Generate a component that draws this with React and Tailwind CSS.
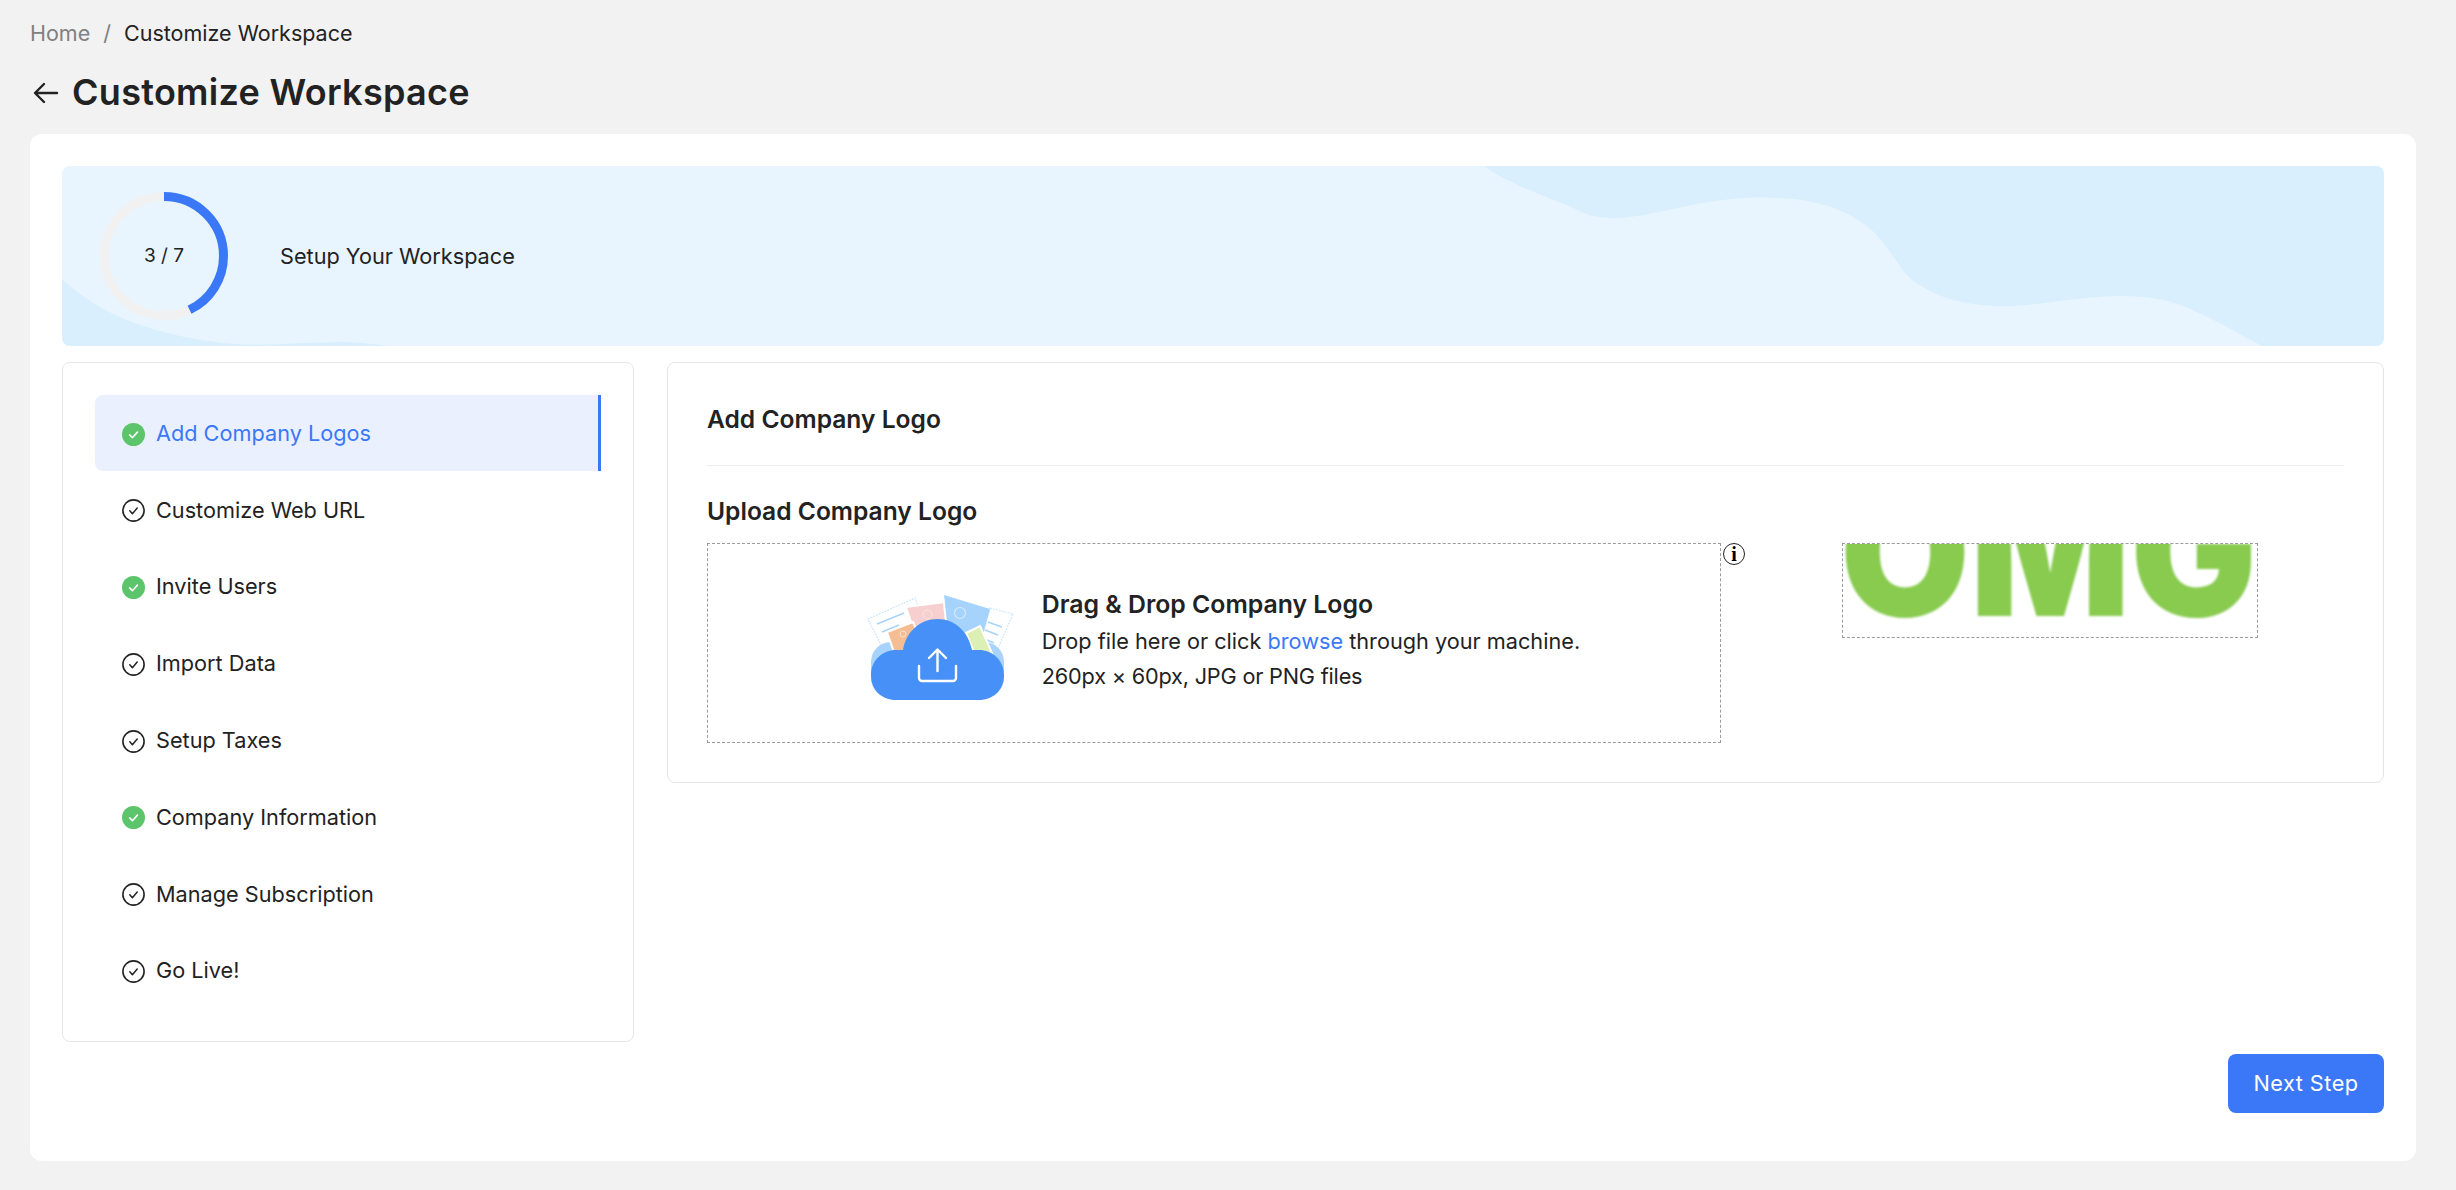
import React from "react";

const steps = [
  { label: "Add Company Logos", done: true, active: true },
  { label: "Customize Web URL" },
  { label: "Invite Users", done: true },
  { label: "Import Data" },
  { label: "Setup Taxes" },
  { label: "Company Information", done: true },
  { label: "Manage Subscription" },
  { label: "Go Live!" },
];

function StepIcon({ done }) {
  if (done) {
    return (
      <svg width="23" height="23" viewBox="0 0 23 23" className="shrink-0">
        <circle cx="11.5" cy="11.5" r="11.5" fill="#5cc46a" />
        <path d="M7.6 11.8l2.8 2.9 5-5.6" fill="none" stroke="#fff" strokeWidth="1.6" strokeLinecap="round" strokeLinejoin="round" />
      </svg>
    );
  }
  return (
    <svg width="23" height="23" viewBox="0 0 23 23" className="shrink-0">
      <circle cx="11.5" cy="11.5" r="10.6" fill="none" stroke="#222" strokeWidth="1.6" />
      <path d="M7.8 11.8l2.6 2.9 4.8-5.6" fill="none" stroke="#222" strokeWidth="1.5" strokeLinecap="round" strokeLinejoin="round" />
    </svg>
  );
}

function Progress() {
  // 3 of 7 steps, drawn clockwise from the top
  const r = 59.5;
  const c = 2 * Math.PI * r;
  return (
    <div className="relative w-[128px] h-[128px] shrink-0">
      <svg width="128" height="128" viewBox="0 0 128 128">
        <circle cx="64" cy="64" r={r} fill="none" stroke="#f1f1f1" strokeWidth="9" />
        <circle
          cx="64"
          cy="64"
          r={r}
          fill="none"
          stroke="#3b78f7"
          strokeWidth="9"
          strokeDasharray={`${(c * 3) / 7} ${c}`}
          transform="rotate(-90 64 64)"
        />
      </svg>
      <div className="absolute inset-0 flex items-center justify-center text-[19px] text-[#222]">3 / 7</div>
    </div>
  );
}

function UploadArt() {
  return (
    <svg width="182" height="150" viewBox="18 0 182 150" className="shrink-0 mt-[3px]">
      <path d="M38 49l47-21 23 56-52 1z" fill="#fff" stroke="#cfe6fc" strokeWidth="1.2" strokeDasharray="2 1" />
      <path d="M47 54l27-11M52 62l17-7" stroke="#a8d4fb" strokeWidth="1.5" />
      <path d="M160 38l23 6-18 41-15-10z" fill="#fff" stroke="#cfe6fc" strokeWidth="1.2" strokeDasharray="2 1" />
      <path d="M158 52l14 5M155 60l13 5M152 68l12 5" stroke="#a8d4fb" strokeWidth="1.5" />
      <rect x="41" y="72" width="133" height="56" rx="20" fill="#a8d4fb" />
      <path d="M76 37l39-5 6 30-36 2z" fill="#f8cfcf" stroke="#fff" strokeWidth="2" />
      <circle cx="97.5" cy="44.5" r="4.5" fill="none" stroke="#fbe6e6" strokeWidth="1" />
      <path d="M57 62l26-10 13 30-30 6z" fill="#f4bd94" stroke="#fff" strokeWidth="2" />
      <circle cx="73" cy="64" r="3" fill="none" stroke="#fbe0cc" strokeWidth="1" />
      <path d="M114 25l46 14-10 36-34-18z" fill="#a5d3fc" />
      <path d="M113 25l4 36" stroke="#fff" strokeWidth="2" />
      <circle cx="130" cy="43" r="5.5" fill="none" stroke="#d5eafd" strokeWidth="1.2" />
      <path d="M136 63l14-7 12 27-16 4z" fill="#dcf0b5" stroke="#fff" strokeWidth="2" />
      <path d="M41 105c0-15 12-25 25-25h7c3-18 17-31 34.500-31s31 13 34.500 31h7c13 0 25 10 25 25s-11 25-25 25H66c-14 0-25-10-25-25z" fill="#4790f8" />
      <path d="M89 96v12a3 3 0 0 0 3 3h31a3 3 0 0 0 3-3V96" fill="none" stroke="#fff" strokeWidth="2.400" strokeLinecap="round" />
      <path d="M107.500 101V80M99 88l8.500-8.500L116 88" fill="none" stroke="#fff" strokeWidth="2.400" strokeLinecap="round" strokeLinejoin="round" />
    </svg>
  );
}

function App() {
  return (
    <div className="h-[1190px] bg-[#f2f2f2] pl-[30px] pr-[40px] font-['Inter',sans-serif] text-[#222] overflow-hidden">
      <div className="h-[66px] flex items-center text-[21.5px] leading-[28px]">
        <span className="text-[#808080]">Home</span>
        <span className="text-[#808080] mx-[13px]">/</span>
        <span>Customize Workspace</span>
      </div>
      <div className="h-[68px] flex items-start pt-[4px]">
        <svg width="32" height="44" viewBox="0 0 32 44" className="mr-[10px]">
          <path d="M27 23H6M14 14l-9 9 9 9" fill="none" stroke="#222" strokeWidth="2.400" strokeLinecap="round" strokeLinejoin="round" />
        </svg>
        <h1 className="text-[36px] leading-[44px] font-semibold tracking-[0.3px]">Customize Workspace</h1>
      </div>

      <div className="bg-white rounded-[12px] h-[1027px] px-[32px] pt-[32px]">
        <div className="relative h-[180px] rounded-[8px] bg-[#e8f5fe] overflow-hidden flex items-center pl-[38px]">
          <svg className="absolute inset-0" width="2322" height="180" viewBox="0 0 2322 180">
            <path
              d="M1422 0C1445 18 1490 32 1522 47C1535 52 1545 52 1555 52C1590 52 1650 28 1710 32C1745 32 1772 40 1791 51C1805 59 1813 66 1821 77C1830 88 1835 97 1843 107C1852 117 1862 122 1872 127C1885 134 1915 140 1938 140C1975 141 2015 130 2060 130C2090 130 2112 135 2130 144C2160 157 2180 170 2200 180H2322V0Z"
              fill="#d9effe"
            />
            <path d="M0 113C40 150 90 168 161 177C200 181 240 176 277 176C295 176 310 178 326 180H0Z" fill="#d9effe" />
          </svg>
          <div className="relative">
            <Progress />
          </div>
          <span className="relative ml-[52px] text-[21.7px]">Setup Your Workspace</span>
        </div>

        <div className="flex items-start gap-[33px] mt-[16px]">
          <div className="w-[572px] h-[680px] shrink-0 border-[1.5px] border-[#e6e6e6] rounded-[8px] p-[32px] flex flex-col gap-[0.8px]">
            {steps.map((s) => (
              <div
                key={s.label}
                className={
                  s.active
                    ? "h-[76px] flex items-center gap-[11px] pl-[27px] pt-[2px] rounded-l-[8px] bg-[#eaf0fd] border-r-[3px] border-[#3b78f7] text-[#3b78f7] text-[21.7px]"
                    : "h-[76px] flex items-center gap-[11px] pl-[27px] pt-[2px] text-[21.7px]"
                }
              >
                <StepIcon done={s.done} />
                <span className="mb-[2px]">{s.label}</span>
              </div>
            ))}
          </div>

          <div className="flex-1 h-[421px] border-[1.5px] border-[#e6e6e6] rounded-[8px] px-[39px]">
            <div className="h-[103px] pt-[11px] flex items-center border-b-[1.5px] border-[#eeeeee]">
              <h2 className="text-[24.6px] font-semibold">Add Company Logo</h2>
            </div>
            <h3 className="text-[24.6px] font-semibold mt-[28px] leading-[34px]">Upload Company Logo</h3>
            <div className="flex items-start mt-[15px]">
              <div className="w-[1014px] h-[200px] border-[1.5px] border-dashed border-[#9a9aa0] flex items-center justify-center gap-[12px]">
                <UploadArt />
                <div className="-mt-[5px]">
                  <div className="text-[24.8px] font-semibold leading-[34px]">Drag &amp; Drop Company Logo</div>
                  <div className="text-[21.7px] leading-[35px] mt-[3px]">
                    Drop file here or click <span className="text-[#3b78f7]">browse</span> through your machine.
                  </div>
                  <div className="text-[21.7px] leading-[35px] tracking-[-0.2px]">260px × 60px, JPG or PNG files</div>
                </div>
              </div>
              <div className="w-[22px] h-[22px] ml-[2px] rounded-full border-[1.5px] border-[#222] flex items-center justify-center font-['Liberation_Serif',serif] font-bold text-[20px] leading-none text-black">
                i
              </div>
              <div className="ml-[97px] w-[416px] h-[95px] border-[1.5px] border-dashed border-[#9a9aa0]">
                <svg width="413" height="92" viewBox="0 0 413 92" className="block">
                  <text
                    x="-3"
                    y="72"
                    textLength="417"
                    lengthAdjust="spacingAndGlyphs"
                    fontFamily="Inter, sans-serif"
                    fontWeight="900"
                    fontSize="178"
                    fill="#88cb4f"
                    className="blur-[1px]"
                  >
                    OMG
                  </text>
                </svg>
              </div>
            </div>
          </div>
        </div>

        <div className="flex justify-end mt-[12px]">
          <button className="w-[156px] h-[59px] rounded-[8px] bg-[#3b78f7] text-white text-[21.7px] tracking-[0.5px]">Next Step</button>
        </div>
      </div>
    </div>
  );
}

export default App;
